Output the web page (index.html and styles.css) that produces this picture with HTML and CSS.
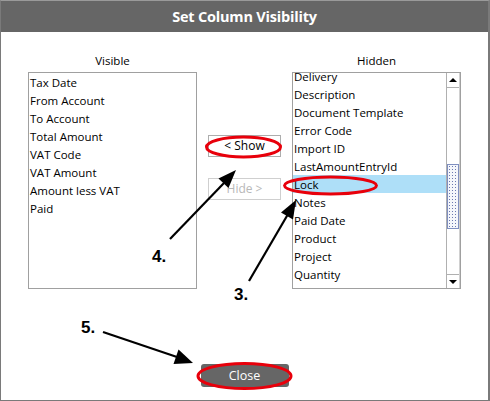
FILE: index.html
```html
<!DOCTYPE html>
<html>
<head>
<meta charset="utf-8">
<link rel="stylesheet" href="styles.css">
</head>
<body>
<div class="window">
  <div class="titlebar">Set Column Visibility</div>
  <div class="content">
    <div class="columns">
      <div class="col">
        <div class="label">Visible</div>
        <div class="listbox">
          <div class="items">
            <div class="item">Tax Date</div>
            <div class="item">From Account</div>
            <div class="item">To Account</div>
            <div class="item">Total Amount</div>
            <div class="item">VAT Code</div>
            <div class="item">VAT Amount</div>
            <div class="item">Amount less VAT</div>
            <div class="item">Paid</div>
          </div>
        </div>
      </div>
      <div class="mid">
        <div class="btn">&lt; Show</div>
        <div class="btn disabled">Hide &gt;</div>
      </div>
      <div class="col">
        <div class="label">Hidden</div>
        <div class="listbox">
          <div class="items">
            <div class="scroll">
              <div class="item">Delivery</div>
              <div class="item">Description</div>
              <div class="item">Document Template</div>
              <div class="item">Error Code</div>
              <div class="item">Import ID</div>
              <div class="item">LastAmountEntryId</div>
              <div class="item selected">Lock</div>
              <div class="item">Notes</div>
              <div class="item">Paid Date</div>
              <div class="item">Product</div>
              <div class="item">Project</div>
              <div class="item">Quantity</div>
              <div class="item">Reference</div>
            </div>
          </div>
          <div class="scrollbar">
            <div class="sb-btn"><span class="tri-up"></span></div>
            <div class="track"><div class="thumb"></div></div>
            <div class="sb-btn bottom"><span class="tri-down"></span></div>
          </div>
        </div>
      </div>
    </div>
    <div class="footer">
      <div class="close">Close</div>
    </div>
  </div>
  <svg class="annot" width="490" height="401" viewBox="0 0 490 401">
    <g fill="none" stroke="#e8000b" stroke-width="3">
      <ellipse cx="243.5" cy="147" rx="37" ry="10"/>
      <ellipse cx="330.5" cy="185.5" rx="46" ry="8.5"/>
      <ellipse cx="244.5" cy="376" rx="46.5" ry="12.5"/>
    </g>
    <g stroke="#000" stroke-width="2.2">
      <line x1="170" y1="239" x2="224" y2="183"/>
      <line x1="249" y1="281" x2="287.5" y2="215"/>
      <line x1="103" y1="332" x2="177" y2="357"/>
    </g>
    <g fill="#000">
      <polygon points="236,170 228.5,188 218.5,178.5"/>
      <polygon points="296,200 293,219.5 281,212.5"/>
      <polygon points="193,363 173.5,364 178.5,349.5"/>
    </g>
    <g class="num">
      <text x="152" y="262">4.</text>
      <text x="234" y="300">3.</text>
      <text x="81" y="333">5.</text>
    </g>
  </svg>
</div>
</body>
</html>
```

FILE: styles.css
```css
* { box-sizing: border-box; }
html, body { margin: 0; padding: 0; background: #fff; }
body { font-family: "Open Sans", "Noto Sans", sans-serif; font-size: 11.5px; color: #000; }

.window {
  position: relative;
  width: 490px;
  height: 401px;
  border-left: 1px solid #7a7a7a;
  border-top: 1px solid #9a9a9a;
  border-right: 2px solid #7a7a7a;
  border-bottom: 1px solid #7a7a7a;
  background: #fff;
  overflow: hidden;
}

.titlebar {
  height: 31px;
  background: #666666;
  color: #fff;
  font-weight: 700;
  font-size: 14.5px;
  line-height: 31px;
  text-align: center;
  letter-spacing: -0.2px;
}

.content {
  padding: 21px 0 0 27px;
}

.columns {
  display: flex;
  gap: 11px;
}

.col {
  width: 169px;
  display: flex;
  flex-direction: column;
}

.label {
  height: 16px;
  line-height: 16px;
  text-align: center;
  margin-bottom: 3px;
}

.listbox {
  height: 217px;
  border: 1px solid #a0a0a0;
  display: flex;
  overflow: hidden;
}

.items {
  flex: 1;
  overflow: hidden;
}

.scroll { margin-top: -6px; }

.item {
  height: 18px;
  padding-top: 2px;
  line-height: 16px;
  padding-left: 1px;
  white-space: nowrap;
}

.item.selected { background: #aedff8; }

.mid {
  width: 73px;
  padding-top: 82px;
  display: flex;
  flex-direction: column;
  gap: 21px;
}

.btn {
  height: 22px;
  line-height: 20px;
  border: 1px solid #adadad;
  text-align: center;
  background: #fff;
  font-size: 12px;
}

.btn.disabled {
  border-color: #cfcfcf;
  color: #b8b8b8;
}

.scrollbar {
  width: 14px;
  border-left: 1px solid #b0b0b0;
  border-right: 1px solid #d0d0d0;
  display: flex;
  flex-direction: column;
}

.sb-btn {
  height: 15px;
  border-bottom: 1px solid #b0b0b0;
  display: flex;
  align-items: center;
  justify-content: center;
}

.sb-btn.bottom {
  border-bottom: none;
  border-top: 1px solid #b0b0b0;
  height: 14px;
}

.tri-up {
  width: 0; height: 0;
  border-left: 4px solid transparent;
  border-right: 4px solid transparent;
  border-bottom: 4px solid #000;
}

.tri-down {
  width: 0; height: 0;
  border-left: 4px solid transparent;
  border-right: 4px solid transparent;
  border-top: 4px solid #000;
}

.track { flex: 1; background: #fff; }

.thumb {
  margin-top: 76px;
  height: 65px;
  border: 1px solid #7f8fc0;
  background-color: #f4f6fb;
  background-image: radial-gradient(circle, #6a78b0 0.6px, transparent 0.9px);
  background-size: 3px 3px;
}

.footer {
  display: flex;
  justify-content: center;
  padding-right: 27px;
  margin-top: 75px;
}

.close {
  width: 88px;
  height: 23px;
  line-height: 23px;
  background: #666666;
  color: #fff;
  border-radius: 3px;
  text-align: center;
  font-size: 12.5px;
}

.annot {
  position: absolute;
  left: -1px;
  top: -1px;
}

.num text {
  font-family: "Liberation Sans", Arial, sans-serif;
  font-weight: 700;
  font-size: 17px;
  fill: #000;
}
```
